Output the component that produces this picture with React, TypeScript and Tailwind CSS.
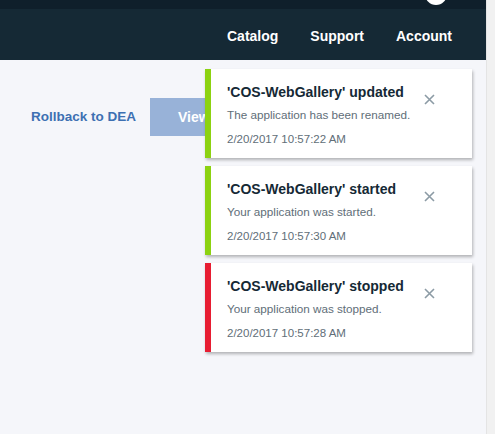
const toasts = [
  {
    title: "'COS-WebGallery' updated",
    message: 'The application has been renamed.',
    time: '2/20/2017 10:57:22 AM',
    bar: 'bg-[#8cd211]',
  },
  {
    title: "'COS-WebGallery' started",
    message: 'Your application was started.',
    time: '2/20/2017 10:57:30 AM',
    bar: 'bg-[#8cd211]',
  },
  {
    title: "'COS-WebGallery' stopped",
    message: 'Your application was stopped.',
    time: '2/20/2017 10:57:28 AM',
    bar: 'bg-[#e71d32]',
  },
];

function CloseIcon() {
  return (
    <svg width="11" height="11" viewBox="0 0 11 11" fill="none">
      <path d="M1 1L10 10M10 1L1 10" stroke="#8c9ba5" strokeWidth="1.6" />
    </svg>
  );
}

export default function App() {
  return (
    <div className="flex w-[495px] h-[434px] overflow-hidden font-['Liberation_Sans',Arial,sans-serif]">
      <div className="flex flex-col flex-1 min-w-0">
        {/* Header */}
        <div className="relative h-[9px] bg-[#0f1f2b]">
          <div className="absolute left-[425px] -top-[17px] w-[22px] h-[22px] rounded-full bg-white" />
        </div>
        <nav className="h-[51px] bg-[#152935] flex items-center justify-end gap-8 pr-[34px] pt-[3px]">
          <span className="text-white font-bold text-[14px]">Catalog</span>
          <span className="text-white font-bold text-[14px]">Support</span>
          <span className="text-white font-bold text-[14px]">Account</span>
        </nav>

        {/* Content */}
        <div className="relative flex-1 bg-[#f5f6fa]">
          <div className="flex items-center gap-[14px] pl-[31px] mt-[38px]">
            <span className="text-[#3d70b2] font-bold text-[13.5px]">Rollback to DEA</span>
            <button className="h-[38px] w-[90px] bg-[#98b2d8] text-white font-bold text-[14px] text-left pl-[28px]">
              View
            </button>
          </div>

          {/* Notifications */}
          <div className="absolute left-[205px] top-[9px] w-[267px] flex flex-col gap-2">
            {toasts.map((t) => (
              <div
                key={t.time}
                className="relative h-[89px] flex bg-white shadow-[1px_2px_3px_rgba(0,0,0,0.28)]"
              >
                <div className={`w-[6px] shrink-0 ${t.bar}`} />
                <div className="pl-4 pt-[14px]">
                  <div className="text-[#152935] font-bold text-[14px] leading-[18px]">{t.title}</div>
                  <div className="mt-[6px] text-[#616e78] text-[11.7px] leading-4">{t.message}</div>
                  <div className="mt-2 text-[#616e78] text-[11.5px] leading-4">{t.time}</div>
                </div>
                <button className="absolute right-[37px] top-[25px] leading-none">
                  <CloseIcon />
                </button>
              </div>
            ))}
          </div>
        </div>
      </div>

      {/* Scrollbar track */}
      <div className="w-[9px] bg-[#f1f1f1] border-l border-[#e4e4e4]" />
    </div>
  );
}
